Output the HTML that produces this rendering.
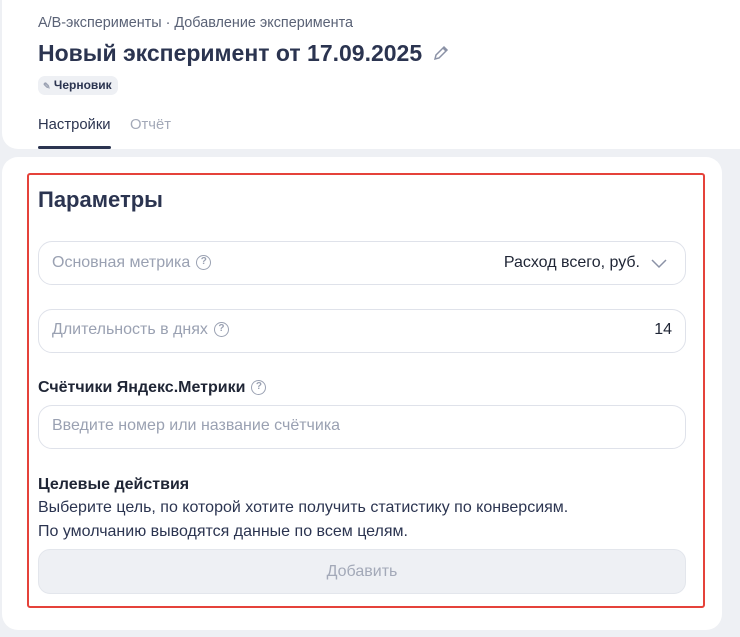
<!DOCTYPE html>
<html><head><meta charset="utf-8"><style>
*{box-sizing:border-box;margin:0;padding:0}
body{width:740px;height:637px;background:#eef0f4;font-family:"Liberation Sans","Noto Sans CJK SC",sans-serif;color:#2b3450;position:relative;overflow:hidden}
.top{position:absolute;left:2px;top:0;width:760px;height:149px;background:#fff;border-radius:0 0 16px 16px}
.card{position:absolute;left:2px;top:157px;width:720px;height:473px;background:#fff;border-radius:16px}
.red{position:absolute;left:27px;top:173px;width:678px;height:435px;border:2px solid #e5423a;border-radius:3px}
.abs{position:absolute;white-space:nowrap}
.field{position:absolute;left:38px;width:648px;height:44px;border:1px solid #dfe2ea;border-radius:14px}
.q{display:inline-block;width:15px;height:15px;border:1.5px solid #9aa1b2;border-radius:50%;font-size:10px;line-height:12px;text-align:center;color:#9aa1b2;font-weight:bold;vertical-align:middle;margin-left:6px}
</style></head><body>
<div class="top"></div>
<div class="abs" style="left:38px;top:15px;font-size:14.4px;color:#5a6276">А/В-эксперименты · Добавление эксперимента</div>
<div class="abs" style="left:38px;top:40px;font-size:23px;font-weight:bold;color:#2b3450">Новый эксперимент от 17.09.2025
<svg width="18" height="18" viewBox="0 0 18 18" style="vertical-align:-1px;margin-left:3px"><path d="M3 15l1-4 8-8 3 3-8 8z M11 4l3 3" fill="none" stroke="#8b92a6" stroke-width="1.5"/></svg></div>
<div class="abs" style="left:38px;top:76px;height:19px;padding:0 6px 0 5px;background:#eef0f4;border-radius:7px;font-size:12px;font-weight:bold;line-height:19px;color:#2b3450"><span style="color:#9aa1b2;font-size:9px">✎</span> Черновик</div>
<div class="abs" style="left:38px;top:117px;font-size:14.8px;color:#2b3450">Настройки</div>
<div class="abs" style="left:130px;top:117px;font-size:14.8px;color:#a3a9b8">Отчёт</div>
<div class="abs" style="left:38px;top:146px;width:73px;height:3px;background:#2b3450;border-radius:2px"></div>
<div class="card"></div>
<div class="red"></div>
<div class="abs" style="left:38px;top:187px;font-size:22px;font-weight:bold">Параметры</div>
<div class="field" style="top:241px"></div>
<div class="abs" style="left:52px;top:254px;font-size:16px;color:#9aa1b2">Основная метрика<span class="q">?</span></div>
<div class="abs" style="right:100px;top:254px;font-size:16px;color:#1f2535">Расход всего, руб.</div>
<svg class="abs" style="left:651px;top:257px" width="16" height="12"><path d="M1 3l7 7 7-7" fill="none" stroke="#8b92a6" stroke-width="1.5"/></svg>
<div class="field" style="top:309px"></div>
<div class="abs" style="left:52px;top:321px;font-size:16px;color:#9aa1b2">Длительность в днях<span class="q">?</span></div>
<div class="abs" style="right:68px;top:321px;font-size:16px;color:#1f2535">14</div>
<div class="abs" style="left:38px;top:379px;font-size:16px;font-weight:bold;color:#1f2535">Счётчики Яндекс.Метрики<span class="q">?</span></div>
<div class="field" style="top:405px"></div>
<div class="abs" style="left:52px;top:417px;font-size:16px;color:#9aa1b2">Введите номер или название счётчика</div>
<div class="abs" style="left:38px;top:476px;font-size:16px;font-weight:bold;color:#1f2535">Целевые действия</div>
<div class="abs" style="left:38px;top:499px;font-size:16px;color:#2b3450">Выберите цель, по которой хотите получить статистику по конверсиям.</div>
<div class="abs" style="left:38px;top:523px;font-size:16px;color:#2b3450">По умолчанию выводятся данные по всем целям.</div>
<div class="abs" style="left:38px;top:549px;width:648px;height:45px;background:#eef0f4;border:1px solid #e3e6ec;border-radius:12px;font-size:16px;color:#a3a9b8;text-align:center;line-height:43px">Добавить</div>
</body></html>
